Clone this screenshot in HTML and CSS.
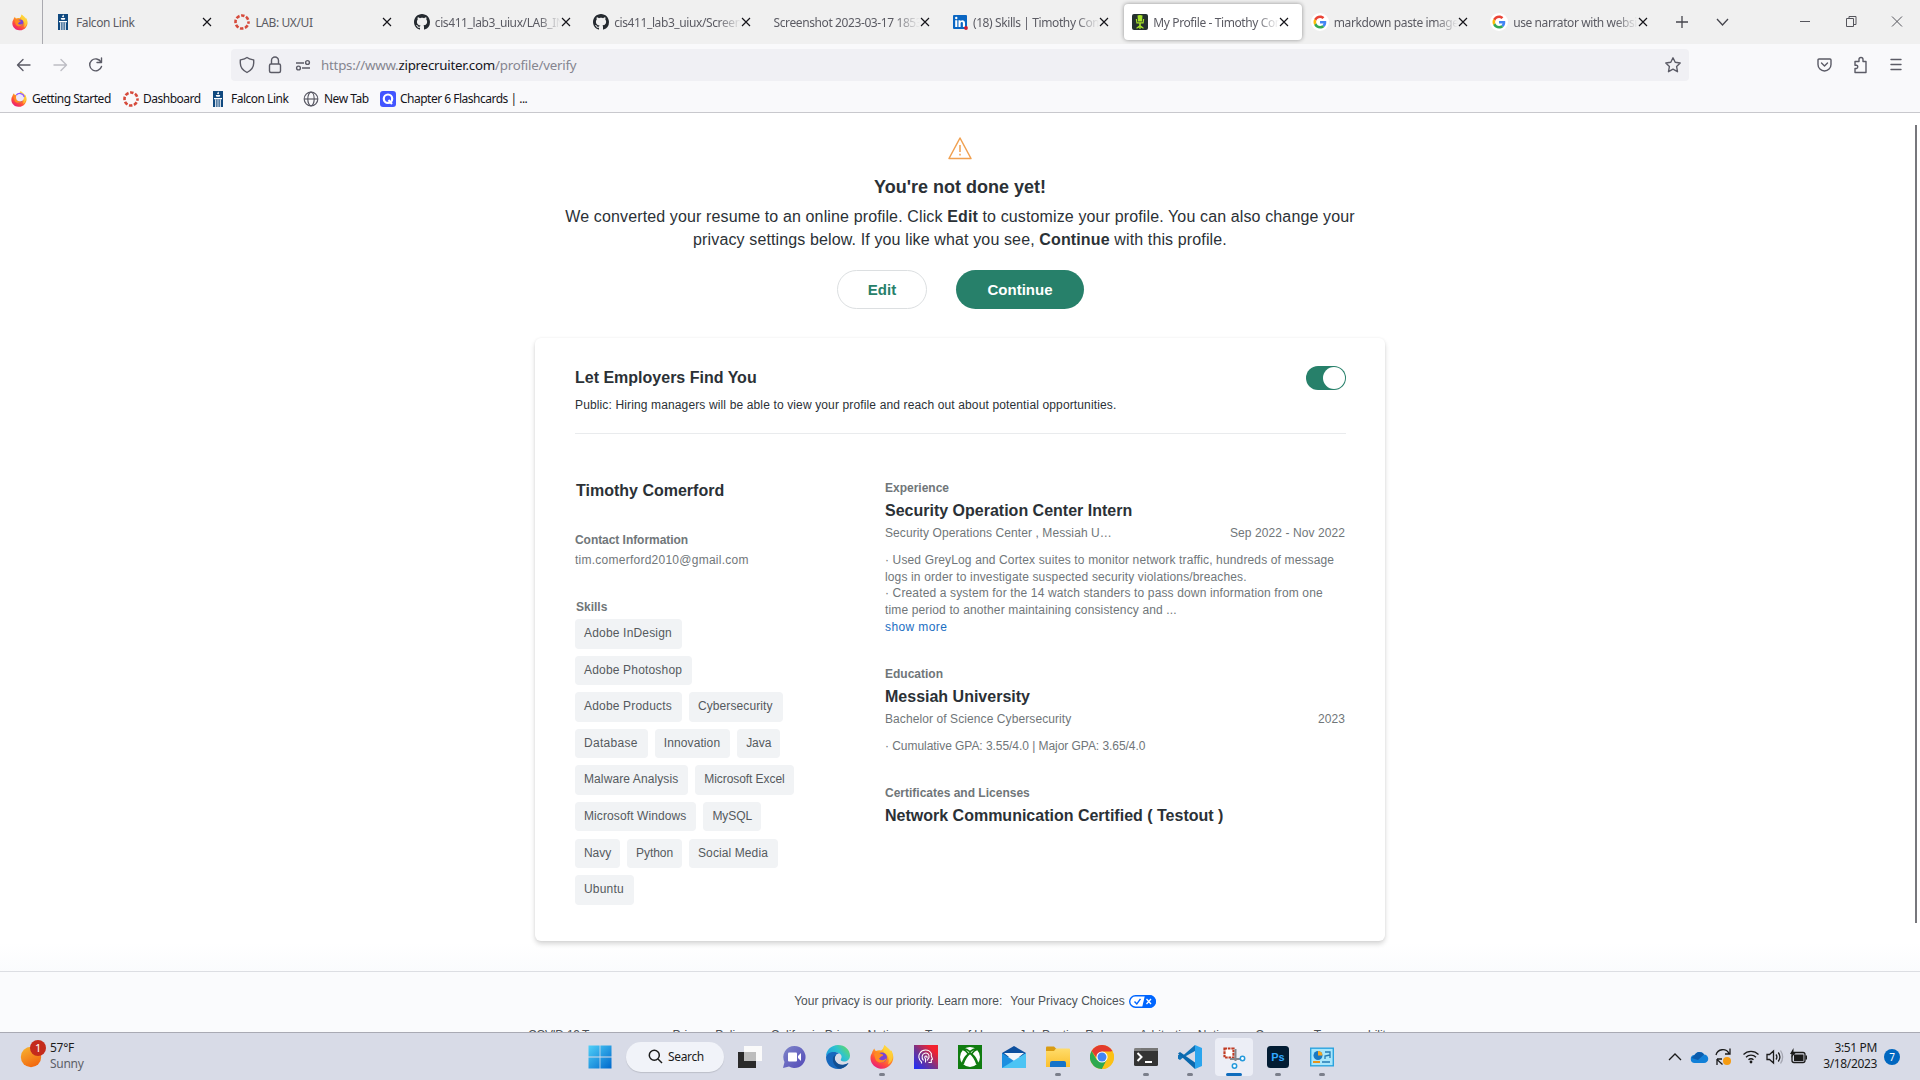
FILE: index.html
```html
<!DOCTYPE html>
<html lang="en">
<head>
<meta charset="utf-8">
<title>My Profile - Timothy Comerford</title>
<link rel="stylesheet" href="styles.css">
</head>
<body>
<svg class="defs" width="0" height="0" aria-hidden="true">
  <defs>
    <linearGradient id="ffg" x1=".8" y1="0" x2=".2" y2="1"><stop offset="0" stop-color="#fff44f"/><stop offset=".4" stop-color="#ff9a1f"/><stop offset=".7" stop-color="#ff4a3d"/><stop offset="1" stop-color="#e31587"/></linearGradient>
    <linearGradient id="wing" x1="0" y1="0" x2="1" y2="1"><stop offset="0" stop-color="#4fd0f8"/><stop offset="1" stop-color="#0068cc"/></linearGradient>
    <linearGradient id="edgeg" x1="0" y1=".6" x2="1" y2="0"><stop offset="0" stop-color="#1b9de2"/><stop offset=".5" stop-color="#2ec3cf"/><stop offset="1" stop-color="#6ee04c"/></linearGradient>
    <linearGradient id="chatg" x1="0" y1="0" x2="1" y2="1"><stop offset="0" stop-color="#7f86c9"/><stop offset="1" stop-color="#5349b8"/></linearGradient>
    <linearGradient id="headg" x1="0" y1="1" x2="1" y2="0"><stop offset="0" stop-color="#1b2fff"/><stop offset=".45" stop-color="#71338f"/><stop offset=".8" stop-color="#f2222f"/></linearGradient>
    <linearGradient id="sung" x1="0" y1="0" x2=".5" y2="1"><stop offset="0" stop-color="#f7b733"/><stop offset="1" stop-color="#f26a10"/></linearGradient>
    <linearGradient id="foldg" x1="0" y1="0" x2="0" y2="1"><stop offset="0" stop-color="#ffdc6b"/><stop offset="1" stop-color="#fbc02d"/></linearGradient>
    <symbol id="firefox" viewBox="0 0 24 24">
      <path fill="url(#ffg)" d="M2 8C2.500 6 3.500 4.500 4.500 3.500C4.500 4.500 5 5.500 6 6C8 5 9.500 5 11 5.500C12.500 5 13.500 3 14.500 0C16 2 19 3.500 20 6.500L21.500 5.500C24 11 24 15 21 19C18 23 13.500 24.500 9 23.400C3.500 22 .5 17.500 .5 13C.5 11 1 9.500 2 8Z"/>
      <path fill="#ffd43a" d="M14.500 0C16 2 21 4 22.500 9C23.600 14 21 18 18 19.500C20 14 18 10 14.500 8C12.500 6 13.500 3 14.500 0Z" opacity=".75"/>
      <circle cx="12" cy="12.500" r="5" fill="#7843d6"/>
      <path fill="#ff8a22" d="M4 9C6 7 9 7.500 11 9C13 9 14 10 12.500 11C10 11.500 10.500 13 9 13.500C10 15.500 14 16 16.500 13C16 18 8 19.500 5.500 14.500Z"/>
    </symbol>
    <symbol id="close" viewBox="0 0 10 10"><path d="M1 1L9 9M9 1L1 9" stroke="#15141a" stroke-width="1.150" fill="none"/></symbol>
    <symbol id="falcon" viewBox="0 0 10 16"><path fill="#10497f" d="M0 0H10V16H0Z"/><path fill="#fff" d="M4.200 3C4 2 5 1.500 5.200 .6C6 1.600 6.200 2.500 5.700 3.200ZM2.700 4H7.300L6.600 5.700H3.400ZM1 7H9V8.200H1ZM2.200 8.600H3.300V16H2.200ZM4.500 8.600H5.500V16H4.500ZM6.700 8.600H7.800V16H6.700Z"/></symbol>
    <symbol id="canvas" viewBox="0 0 16 16"><circle cx="8" cy="8" r="6.500" fill="none" stroke="#d64b3c" stroke-width="2.600" stroke-dasharray="3.500 1.600" stroke-dashoffset="1.700"/></symbol>
    <symbol id="github" viewBox="0 0 16 16"><path fill="#24292f" d="M8 0C3.580 0 0 3.580 0 8c0 3.540 2.290 6.530 5.470 7.590.4.070.55-.17.55-.38 0-.19-.01-.82-.01-1.490-2.010.37-2.530-.49-2.690-.94-.09-.23-.48-.94-.82-1.130-.28-.15-.68-.52-.01-.53.63-.01 1.080.58 1.230.82.72 1.210 1.870.87 2.330.66.07-.52.28-.87.51-1.070-1.780-.2-3.640-.89-3.640-3.950 0-.87.31-1.590.82-2.150-.08-.2-.36-1.020.08-2.120 0 0 .67-.21 2.200.82.64-.18 1.320-.27 2-.27s1.360.09 2 .27c1.530-1.040 2.200-.82 2.200-.82.44 1.100.16 1.920.08 2.120.51.56.82 1.270.82 2.150 0 3.070-1.870 3.750-3.650 3.950.29.25.54.73.54 1.480 0 1.070-.01 1.930-.01 2.200 0 .21.15.46.55.38A8.010 8.010 0 0 0 16 8c0-4.420-3.580-8-8-8z"/></symbol>
    <symbol id="google" viewBox="0 0 18 18"><circle cx="9" cy="9" r="9" fill="#fff"/><g transform="translate(2.500 2.500) scale(.272)"><path fill="#EA4335" d="M24 9.500c3.540 0 6.710 1.220 9.210 3.600l6.850-6.850C35.900 2.380 30.470 0 24 0 14.620 0 6.510 5.380 2.560 13.220l7.980 6.190C12.430 13.720 17.740 9.500 24 9.500z"/><path fill="#4285F4" d="M46.980 24.550c0-1.570-.15-3.090-.38-4.550H24v9.020h12.940c-.58 2.960-2.260 5.480-4.780 7.180l7.730 6c4.510-4.180 7.090-10.360 7.090-17.650z"/><path fill="#FBBC05" d="M10.530 28.590c-.48-1.450-.76-2.990-.76-4.590s.27-3.140.76-4.590l-7.980-6.190C.92 16.460 0 20.120 0 24c0 3.880.92 7.540 2.560 10.780l7.970-6.190z"/><path fill="#34A853" d="M24 48c6.480 0 11.930-2.130 15.890-5.810l-7.730-6c-2.150 1.450-4.920 2.300-8.160 2.300-6.260 0-11.570-4.220-13.470-9.910l-7.980 6.190C6.510 42.620 14.620 48 24 48z"/></g></symbol>
  </defs>
</svg>

<header class="tabs">
  <div class="ff-view"><svg width="16" height="17"><use href="#firefox"/></svg></div>
  <div class="tab"><svg class="fav" width="16" height="16"><use href="#falcon"/></svg><span class="tab-title">Falcon Link</span><svg class="x" width="10" height="10"><use href="#close"/></svg></div>
  <div class="tab"><svg class="fav" width="16" height="16"><use href="#canvas"/></svg><span class="tab-title">LAB: UX/UI</span><svg class="x" width="10" height="10"><use href="#close"/></svg></div>
  <div class="tab"><svg class="fav" width="16" height="16"><use href="#github"/></svg><span class="tab-title fade">cis411_lab3_uiux/LAB_INS</span><svg class="x" width="10" height="10"><use href="#close"/></svg></div>
  <div class="tab"><svg class="fav" width="16" height="16"><use href="#github"/></svg><span class="tab-title fade">cis411_lab3_uiux/Screenshot</span><svg class="x" width="10" height="10"><use href="#close"/></svg></div>
  <div class="tab"><span class="tab-title fade no-icon">Screenshot 2023-03-17 185321</span><svg class="x" width="10" height="10"><use href="#close"/></svg></div>
  <div class="tab"><svg class="fav" width="16" height="16" viewBox="-1 0 16 16"><rect y="1" width="14" height="14" rx="1" fill="#0a66c2"/><path fill="#fff" d="M2.200 6.200H4.300V13H2.200ZM5.500 6.200H7.500V7.200C8.500 5.600 12 5.700 12 8.900V13H9.900V9.400C9.900 7.300 7.600 7.500 7.600 9.400V13H5.500Z"/><circle cx="3.250" cy="4" r="1.200" fill="#fff"/><circle cx="13" cy="14" r="1.900" fill="#cf1b2f"/></svg><span class="tab-title fade">(18) Skills | Timothy Comerford</span><svg class="x" width="10" height="10"><use href="#close"/></svg></div>
  <div class="tab active"><svg class="fav" width="16" height="16" viewBox="0 0 16 16"><rect width="16" height="16" rx="2" fill="#24302f"/><path fill="#a6e22a" d="M5.500 1.500Q8 .5 10.500 1.500L10 7.500H6ZM3.800 5H5L5.400 8.300H10.600L11 5H12.200L11.600 9.600H8.800V11.500L11.500 13.500V14.700L8.600 13.400V15H7.400V13.400L4.500 14.700V13.500L7.200 11.500V9.600H4.400Z"/></svg><span class="tab-title fade">My Profile - Timothy Comer</span><svg class="x" width="10" height="10"><use href="#close"/></svg></div>
  <div class="tab"><svg class="fav" width="18" height="18"><use href="#google"/></svg><span class="tab-title fade">markdown paste image f</span><svg class="x" width="10" height="10"><use href="#close"/></svg></div>
  <div class="tab"><svg class="fav" width="18" height="18"><use href="#google"/></svg><span class="tab-title fade">use narrator with website</span><svg class="x" width="10" height="10"><use href="#close"/></svg></div>
  <svg class="tab-tools" width="60" height="16" viewBox="0 0 60 16" fill="none" stroke="#45454d" stroke-width="1.300"><path d="M4 8H16M10 2V14M45 5L50.500 11L56 5"/></svg>
  <svg class="win-tools" width="112" height="16" viewBox="0 0 112 16" fill="none" stroke="#55555c"><path d="M5 7.500H15M51.500 4.500H58.500V12.500H51.500ZM54 4.500V2.500H61V10.500H58.500M97 2.500L107 12.500M107 2.500L97 12.500"/></svg>
</header>

<nav class="navbar">
  <svg class="nav-arrows" width="100" height="20" viewBox="0 0 100 20" fill="none" stroke="#5b5b66" stroke-width="1.400" stroke-linecap="round" stroke-linejoin="round"><path d="M14 10H2M7 4.500L1.500 10L7 15.500"/><path stroke="#bdbdc4" d="M38 10H50M45 4.500L50.500 10L45 15.500"/><path d="M85 7A6 6 0 1 0 85.500 11.500M85.500 3V7.500H81"/></svg>
  <div class="urlbar">
    <svg width="76" height="20" viewBox="0 0 76 20" fill="none" stroke="#5b5b66" stroke-width="1.400" stroke-linejoin="round"><path d="M9 2.500C11 4 13.500 4.500 15.700 5V8C15.700 13 12.500 15.700 9 17.500C5.500 15.700 2.300 13 2.300 8V5C4.500 4.500 7 4 9 2.500Z"/><rect x="31.500" y="9" width="11" height="8.500" rx="1.500"/><path d="M33.500 9V5.500A3.500 3.500 0 0 1 40.500 5.500V9M58 8H66M64 13H72"/><circle cx="69.500" cy="7.500" r="1.900"/><circle cx="60.500" cy="13" r="1.900"/></svg>
    <span class="url">https://www.<b>ziprecruiter.com</b>/profile/verify</span>
    <svg class="star" width="18" height="18" viewBox="0 0 18 18" fill="none" stroke="#5b5b66" stroke-width="1.400" stroke-linejoin="round"><path d="M9 1.800L11.200 6.300L16.200 7L12.600 10.500L13.500 15.700L9 13.200L4.500 15.700L5.400 10.500L1.800 7L6.800 6.300Z"/></svg>
  </div>
  <svg class="nav-tools" width="92" height="20" viewBox="0 0 92 20" fill="none" stroke="#5b5b66" stroke-width="1.400" stroke-linejoin="round" stroke-linecap="round"><path d="M4 4H15Q16 4 16 5V9.500A6.500 6.500 0 0 1 3 9.500V5Q3 4 4 4ZM6.500 8L9.500 11L12.500 8"/><path d="M40 17.500V13.500H41.500A1.700 1.700 0 0 0 41.500 10.200H40V6.500H44V4.500A2 2 0 0 1 48 4.500V6.500H51V17.500Z"/><path d="M76 4.500H86M76 9.500H86M76 14.500H86"/></svg>
</nav>

<div class="bookmarks">
  <svg width="16" height="16" viewBox="0 0 24 24"><use href="#firefox"/><circle cx="13.500" cy="9.500" r="6" fill="#ece8fa"/><path d="M8 6A7 7 0 0 1 20 9" stroke="#9059ff" stroke-width="2" fill="none"/></svg><span class="bm bm1">Getting Started</span>
  <svg width="16" height="16"><use href="#canvas"/></svg><span class="bm bm2">Dashboard</span>
  <svg width="16" height="16"><use href="#falcon"/></svg><span class="bm bm3">Falcon Link</span>
  <svg width="16" height="16" viewBox="0 0 16 16" fill="none" stroke="#5b5b66" stroke-width="1.200"><circle cx="8" cy="8" r="6.800"/><ellipse cx="8" cy="8" rx="3.200" ry="6.800"/><path d="M1.200 8H14.800"/></svg><span class="bm bm4">New Tab</span>
  <svg width="16" height="16" viewBox="0 0 16 16"><rect width="16" height="16" rx="3" fill="#4255ff"/><circle cx="8" cy="7.700" r="4.200" fill="none" stroke="#fff" stroke-width="2.200"/><path d="M8.500 9L12 13" stroke="#fff" stroke-width="2"/></svg><span class="bm bm5">Chapter 6 Flashcards | ...</span>
</div>

<main class="page">
  <div class="scrollbar"></div>
  <section class="intro">
    <svg class="warn" width="24" height="23" viewBox="0 0 24 23" fill="none" stroke="#f0a050" stroke-width="1.500" stroke-linejoin="round"><path d="M12 1L23 21.500H1Z"/><path d="M12 8V15M12 16.800V18.500"/></svg>
    <h1>You're not done yet!</h1>
    <p>We converted your resume to an online profile. Click <b>Edit</b> to customize your profile. You can also change your privacy settings below. If you like what you see, <b>Continue</b> with this profile.</p>
    <div class="actions"><button class="edit">Edit</button><button class="continue">Continue</button></div>
  </section>

  <section class="card">
    <div class="visibility">
      <div><h2>Let Employers Find You</h2><p>Public: Hiring managers will be able to view your profile and reach out about potential opportunities.</p></div>
      <div class="toggle"><i></i></div>
    </div>
    <div class="profile">
      <div class="left">
        <h2 class="name">Timothy Comerford</h2>
        <h3 class="contact">Contact Information</h3>
        <p class="email">tim.comerford2010@gmail.com</p>
        <h3 class="skills-label">Skills</h3>
        <div class="skills">
          <div><span>Adobe InDesign</span></div>
          <div><span>Adobe Photoshop</span></div>
          <div><span>Adobe Products</span><span class="snug">Cybersecurity</span></div>
          <div><span class="loose">Database</span><span class="snug">Innovation</span><span class="tight">Java</span></div>
          <div><span class="snug">Malware Analysis</span><span class="tight">Microsoft Excel</span></div>
          <div><span class="snug">Microsoft Windows</span><span class="tight">MySQL</span></div>
          <div><span class="tight">Navy</span><span class="tight">Python</span><span class="snug">Social Media</span></div>
          <div><span>Ubuntu</span></div>
        </div>
      </div>
      <div class="right">
        <article class="experience">
          <h3>Experience</h3>
          <h2>Security Operation Center Intern</h2>
          <div class="meta"><span>Security Operations Center , Messiah U…</span><span>Sep 2022 - Nov 2022</span></div>
          <p class="desc">· Used GreyLog and Cortex suites to monitor network traffic, hundreds of message<br>logs in order to investigate suspected security violations/breaches.<br>· Created a system for the 14 watch standers to pass down information from one<br>time period to another maintaining consistency and ...<br><a>show more</a></p>
        </article>
        <article class="education">
          <h3>Education</h3>
          <h2>Messiah University</h2>
          <div class="meta"><span>Bachelor of Science Cybersecurity</span><span>2023</span></div>
          <p class="desc gpa">· Cumulative GPA: 3.55/4.0 | Major GPA: 3.65/4.0</p>
        </article>
        <article>
          <h3>Certificates and Licenses</h3>
          <h2>Network Communication Certified ( Testout )</h2>
        </article>
      </div>
    </div>
  </section>

  <footer>
    <div class="privacy"><span>Your privacy is our priority. Learn more:</span><span>Your Privacy Choices</span>
      <svg width="27" height="13" viewBox="0 0 27 13"><rect x=".7" y=".7" width="25.600" height="11.600" rx="5.800" fill="#fff" stroke="#06f" stroke-width="1.400"/><path fill="#06f" d="M16 0H20.500A6.500 6.500 0 0 1 20.500 13H13Z"/><path d="M5.500 6.500L7.800 9L11.500 3.800" fill="none" stroke="#06f" stroke-width="1.400"/><path d="M17.500 4L22 9M22 4L17.500 9" stroke="#fff" stroke-width="1.300"/></svg>
    </div>
    <div class="links"><span class="covid">COVID-19 Transparency</span><span>Privacy Policy</span><span>California Privacy Notice</span><span>Terms of Use</span><span>Job Posting Rules</span><span>Arbitration Notice</span><span>Consumer Transparability</span></div>
  </footer>
</main>

<div class="taskbar">
  <div class="weather">
    <svg width="28" height="32" viewBox="0 0 28 32"><circle cx="12" cy="19" r="10.200" fill="url(#sung)"/><circle cx="19" cy="10" r="8" fill="#c42b1c"/><text x="19" y="14" text-anchor="middle" class="badge-num">1</text></svg>
    <div><div>57°F</div><div class="sunny">Sunny</div></div>
  </div>
  <div class="apps">
    <div class="app"><svg width="24" height="24" viewBox="0 0 24 24"><path fill="url(#wing)" d="M.5.5H11.600V11.600H.5ZM12.400.5H23.500V11.600H12.400ZM.5 12.400H11.600V23.500H.5ZM12.400 12.400H23.500V23.500H12.400Z"/></svg></div>
    <div class="search"><svg width="15" height="15" viewBox="0 0 15 15" fill="none" stroke="#1b1b1b" stroke-width="1.500"><circle cx="6.300" cy="6.300" r="5"/><path d="M10 10L14 14"/></svg><span>Search</span></div>
    <div class="app"><svg width="24" height="24" viewBox="0 0 24 24"><path fill="#2a2a2a" d="M0 7H18V23H0Z"/><path fill="#fafafa" d="M6 1H24V16H6Z"/><path fill="#bdbdbd" d="M6 7H18V16H6Z"/></svg></div>
    <div class="app"><svg width="24" height="24" viewBox="0 0 24 24"><path fill="url(#chatg)" d="M12.500 1A11 11 0 1 1 7 21.500L1 23L2.500 17A11 11 0 0 1 12.500 1Z"/><rect x="6" y="7.500" width="9" height="9" rx="1" fill="#fff"/><path fill="#fff" d="M16 11L19 8V16L16 13Z"/></svg></div>
    <div class="app"><svg width="24" height="24" viewBox="0 0 24 24"><path fill="url(#edgeg)" d="M0 11.500C0 5 5.500 0 12 0C19 0 24 5 24 10.500C24 14.500 21 16.500 18 16.500C15.500 16.500 14 15.500 15 14C17 10.500 14 7.500 10 7.500C5 7.500 1 9.500 0 11.500Z"/><path fill="#1768bd" d="M0 12C1 7 9 5.500 13 8.500C9.500 9 8 12 9 15.500C10.500 20 17 21.500 22.500 18C20 22 16 24 12 24C5 24 0 19 0 12Z"/><path fill="#124f92" d="M7 13C6 18 10 23 14 23.700C18 23 21 21 22.500 18C17 21 11.500 20 9.500 16C8.500 14 8.500 12 10 10C8 10.500 7.200 11.700 7 13Z"/></svg></div>
    <div class="app"><svg width="24" height="24"><use href="#firefox"/></svg><i class="run"></i></div>
    <div class="app"><svg width="24" height="24" viewBox="0 0 24 24"><rect width="24" height="24" fill="url(#headg)"/><path d="M7.500 18.500V17C4.500 14.500 4 10.500 6 8C8.500 4 15 4 17.300 8.500V11L18.500 14L17.300 15V17.500H14.500M9.500 15.500C7 12.500 8 9 10.700 8.200C13.300 7.500 15.500 9.500 15 12.500L13 15.500M11.500 17.500V13.800C10 12.500 11 11 12 11C13 11 13.300 12 12.800 13" fill="none" stroke="#fff" stroke-width="1.100"/></svg></div>
    <div class="app"><svg width="24" height="24" viewBox="0 0 24 24"><rect width="24" height="24" fill="#107c10"/><circle cx="12" cy="12" r="10" fill="#fff"/><path d="M5 4C8 3 10 5 12 6.700C14 5 16 3 19 4M5 19C6.500 14 9 10.500 12 8C15 10.500 17.500 14 19 19M5 4.500C7 5 9 7 10.500 9C7 12 5 15.500 4.500 19M19 4.500C17 5 15 7 13.500 9C17 12 19 15.500 19.500 19" fill="none" stroke="#107c10" stroke-width="1.800"/></svg></div>
    <div class="app"><svg width="24" height="24" viewBox="0 0 24 24"><path fill="#0d4f9e" d="M0 8L12 1L24 8V12H0Z"/><path fill="#f3f6fa" d="M2 8H22L12 16Z"/><path fill="#1c8fe0" d="M0 8L12 16L24 23H0Z"/><path fill="#4cc4f4" d="M24 8V23H0Z"/></svg></div>
    <div class="app"><svg width="24" height="24" viewBox="0 0 24 24"><path fill="#d99b12" d="M0 2.500Q0 1.500 1 1.500H8L10.500 4L8 7H0Z"/><path fill="url(#foldg)" d="M0 6H8L10 3.500H23Q24 3.500 24 4.500V22H0Z"/><path fill="#1573c9" d="M4 22V18Q4 16 6 16H18Q20 16 20 18V22Z"/></svg><i class="run"></i></div>
    <div class="app"><svg width="24" height="24" viewBox="0 0 24 24"><circle cx="12" cy="12" r="12" fill="#fbc116"/><path fill="#e33b2e" d="M1.600 6A12 12 0 0 1 22.400 6L12 12H6Z"/><path fill="#2da94f" d="M1.600 6A12 12 0 0 0 12 24L17.200 15L6.800 15Z"/><path fill="#fbc116" d="M12 6.500H22.600A12 12 0 0 1 12 24L17 14Z"/><circle cx="12" cy="12" r="5.600" fill="#fff"/><circle cx="12" cy="12" r="4.500" fill="#4285f4"/></svg></div>
    <div class="app"><svg width="24" height="24" viewBox="0 0 24 24"><rect y="3" width="24" height="18" rx="1.500" fill="#343434"/><path fill="#777" d="M7 3H24V6H7Z"/><path fill="#c9c9c9" d="M0 4Q0 3 1 3H7V6H0Z" opacity=".5"/><path d="M3.500 8L7.500 12L3.500 16M11 17H18" fill="none" stroke="#fff" stroke-width="2"/></svg><i class="run"></i></div>
    <div class="app"><svg width="24" height="24" viewBox="0 0 24 24"><path fill="#0f72b8" d="M17 0L4.500 11L2 9L0 10.300V13.700L2 15L4.500 13L17 6Z"/><path fill="#0a68ad" d="M0 8.500L2 7L17 17.500V24Z"/><path fill="#2aa5ee" d="M17 0L24 3V21L17 24Z"/></svg><i class="run"></i></div>
    <div class="app selected"><svg width="24" height="24" viewBox="0 0 24 24"><path d="M2.500 3.500H11.500V12.500H2.500Z" fill="#fff" stroke="#c03b24" stroke-width="2.200" stroke-dasharray="2.600 .8"/><path d="M13.500 4V16M8 14H19" stroke="#85878c" stroke-width="2"/><circle cx="20.500" cy="13.500" r="2.200" fill="#fff" stroke="#2399dc" stroke-width="1.500"/><circle cx="12.500" cy="21" r="2.200" fill="#fff" stroke="#2399dc" stroke-width="1.500"/></svg><i class="run current"></i></div>
    <div class="app"><svg width="24" height="24" viewBox="0 0 24 24"><rect x="1" y="1" width="22" height="22" rx="3.500" fill="#021c33"/><text x="12" y="16" text-anchor="middle" class="ps">Ps</text></svg><i class="run"></i></div>
    <div class="app"><svg width="24" height="24" viewBox="0 0 24 24"><rect x=".7" y="3.200" width="22.600" height="17.600" fill="#a8e6fb" stroke="#2ba3df" stroke-width="1.400"/><circle cx="8" cy="10.500" r="4.500" fill="#1a78c2"/><path fill="#f5a623" d="M8 10.500V6A4.500 4.500 0 0 1 12.500 10.500Z"/><path d="M3 17H10" stroke="#e8941a" stroke-width="2"/><path d="M12 17H20M15 14V11L20 10M15 7H20V13" stroke="#247bb5" fill="none" stroke-width="1.300"/></svg><i class="run"></i></div>
  </div>
  <div class="tray">
    <svg width="148" height="24" viewBox="0 0 148 24" fill="none" stroke="#1b1b1b" stroke-width="1.300"><path d="M4 15L10 9L16 15"/><path fill="#1180d8" stroke="none" d="M30 18A4 4 0 0 1 29.500 10A5.500 5.500 0 0 1 39 9.500A4.200 4.200 0 0 1 39 18Z"/><path fill="#0b5cad" stroke="none" d="M29.500 10A5.500 5.500 0 0 1 39 9.500L33 15L26.500 13Z"/><path d="M51 10A7 7 0 0 1 64 8.500M65 3.500V9H60M52 14V20M52 14H57M52 14.500L57.500 19.500"/><circle cx="62" cy="16" r="4" fill="#f59b11" stroke="none"/><path d="M78.500 9.500A10.500 10.500 0 0 1 93.500 9.500M81 12.200A7 7 0 0 1 91 12.200M83.500 14.800A3.500 3.500 0 0 1 88.500 14.800"/><circle cx="86" cy="17" r="1.400" fill="#1b1b1b" stroke="none"/><path d="M102 9.500H104.500L108.500 6V18L104.500 14.500H102ZM111 9.500Q112.800 12 111 14.500M113.300 7.500Q116.500 12 113.300 16.500"/><path d="M115.500 5.500Q119.800 12 115.500 18.500" stroke="#a5a7b2"/><rect x="127" y="7.500" width="13" height="10" rx="2"/><path fill="#1b1b1b" stroke="none" d="M129 9.500H138.500V16H129ZM140.500 10.500H142V14.500H140.500ZM128.500 3L125 9H127.500L126 13L131 7.500H128.500Z"/></svg>
    <div class="clock"><div>3:51 PM</div><div>3/18/2023</div></div>
    <div class="count">7</div>
  </div>
</div>
</body>
</html>
```
FILE: styles.css
```css
* { box-sizing: border-box; }
body { margin: 0; width: 1920px; height: 1080px; overflow: hidden; display: flex; flex-direction: column; background: #fff; font: 12px/16px "Liberation Sans", Arial, sans-serif; color: #2b3136; }
h1, h2, h3, p { margin: 0; }
svg { flex: none; display: block; }
.defs { position: absolute; }

.tabs, .navbar, .bookmarks, .taskbar { font-family: "Noto Sans", "Open Sans", sans-serif; }

.tabs { height: 44px; flex: none; display: flex; align-items: center; background: #f0f0f0; }
.ff-view { width: 43px; height: 44px; flex: none; border-right: 1px solid #aaaab0; display: flex; align-items: center; justify-content: center; padding-right: 3px; margin-right: 4px; }
.tab { width: 179.4px; flex: none; height: 36px; display: flex; align-items: center; padding: 0 14px 0 8px; }
.tab.active { width: 177.4px; margin: 0 1px; padding: 0 13px 0 8px; background: #fff; border-radius: 4px; box-shadow: 0 0 4px rgba(0,0,0,.4); }
.fav { margin-right: 5px; }
.tab-title { flex: 1; min-width: 0; overflow: hidden; white-space: nowrap; font-size: 12px; letter-spacing: -.4px; color: #5b5b63; margin-top: 1px; }
.tab-title.no-icon { margin-left: 1px; }
.fade { -webkit-mask-image: linear-gradient(90deg, #000 82%, transparent); mask-image: linear-gradient(90deg, #000 82%, transparent); }
.tab-tools { margin-left: 10px; }
.win-tools { margin-left: 63px; }

.navbar { height: 42px; flex: none; display: flex; align-items: center; background: #f9f9fb; }
.nav-arrows { margin: 0 115px 0 16px; }
.urlbar { width: 1458px; height: 32px; border-radius: 4px; background: #f0f0f4; display: flex; align-items: center; padding-left: 7px; }
.url { margin-left: 7px; font-size: 13.3px; letter-spacing: -.23px; color: #85858f; }
.url b { font-weight: 400; color: #15141a; }
.star { margin-left: auto; margin-right: 7px; }
.nav-tools { margin-left: 126px; }

.bookmarks { height: 27px; flex: none; display: flex; align-items: center; background: #f9f9fb; border-bottom: 1px solid #c8c8cd; padding: 0 0 1px 11px; color: #15141a; }
.bm { white-space: nowrap; letter-spacing: -.5px; margin-left: 5px; }
.bm1 { width: 91px; }
.bm2 { width: 67px; margin-left: 4px; }
.bm3 { width: 72px; }
.bm4 { width: 56px; }
.bm5 { margin-left: 4px; }

.page { position: relative; height: 919px; flex: none; display: flex; flex-direction: column; align-items: center; overflow: hidden; background: linear-gradient(#fff 830px, #fafbfd 860px); }
.scrollbar { position: absolute; right: 3px; top: 12px; width: 2px; height: 798px; background: #77777c; }
.intro { width: 850px; text-align: center; display: flex; flex-direction: column; align-items: center; }
.warn { margin-top: 24px; }
.intro h1 { font-size: 18px; line-height: 24px; margin-top: 15px; }
.intro p { font-size: 16px; line-height: 23px; margin-top: 6px; width: 810px; letter-spacing: .13px; }
.actions { display: flex; gap: 29px; margin-top: 19px; padding-left: 1px; }
button { height: 39px; padding: 0; border-radius: 20px; font: bold 15px/20px "Liberation Sans", Arial, sans-serif; }
.edit { width: 90px; background: #fff; border: 1px solid #dcdfe1; color: #27806a; }
.continue { width: 128px; background: #27806a; border: 0; color: #fff; }

.card { width: 850px; height: 603px; flex: none; margin-top: 29px; padding: 28px 39px 0 40px; background: #fff; border-radius: 6px; box-shadow: 0 3px 5px rgba(0,0,0,.16), 0 0 3px rgba(0,0,0,.05); }
h2 { font-size: 16px; line-height: 22px; }
.visibility { height: 68px; display: flex; justify-content: space-between; border-bottom: 1px solid #e9ebed; }
.visibility h2 { padding-top: 1px; }
.visibility p { margin-top: 8px; font-size: 12px; line-height: 16px; letter-spacing: .135px; }
.toggle { width: 40px; height: 24px; border-radius: 12px; background: #27806a; padding: 1px; display: flex; justify-content: flex-end; }
.toggle i { width: 22px; height: 22px; border-radius: 50%; background: #fff; }
h3 { font-size: 12px; line-height: 16px; color: #707679; }
.profile { display: flex; color: #707679; }
.profile h2 { color: #2b3136; }
.left { width: 310px; flex: none; padding-top: 46px; }
.name { margin: 0 0 30px 1px; }
.contact { letter-spacing: -.05px; }
.email { margin-top: 4px; letter-spacing: .25px; }
.skills-label { margin: 31px 0 0 1px; }
.skills { margin-top: 4px; }
.skills div { display: flex; gap: 7px; height: 29.5px; margin-bottom: 7.1px; }
.skills span { background: #f1f3f5; border-radius: 4px; padding: 0 10px 0 9px; line-height: 29px; color: #555a5e; letter-spacing: .18px; white-space: nowrap; }
.skills .snug { letter-spacing: .1px; }
.skills .tight { letter-spacing: -.07px; padding-right: 9px; }
.skills .loose { letter-spacing: .3px; }
.right { width: 461px; padding-top: 46px; }
.right h2 { margin-top: 4px; line-height: 22px; }
.meta { display: flex; justify-content: space-between; margin-top: 2px; line-height: 18px; padding-right: 1px; letter-spacing: .09px; }
.desc { margin-top: 10px; line-height: 16.7px; white-space: nowrap; letter-spacing: .14px; }
.desc.gpa { letter-spacing: -.05px; }
.desc a { color: #1b6ec2; letter-spacing: .4px; }
.experience { height: 186px; }
.education { height: 119px; }

footer { width: 100%; height: 61px; flex: none; margin-top: 30px; border-top: 1px solid #dcdee3; background: #fafbfd; display: flex; flex-direction: column; align-items: center; color: #4d5257; }
.privacy { display: flex; align-items: center; margin-top: 21px; height: 16px; padding-left: 30px; }
.privacy span { margin-right: 8px; }
.privacy span + span { margin-right: 4px; letter-spacing: .05px; }
.links { display: flex; justify-content: space-between; width: 864px; margin-top: 18px; white-space: nowrap; }
.links .covid { letter-spacing: -.5px; }

.taskbar { position: relative; height: 48px; flex: none; border-top: 1px solid #a9aab4; background: #d8dbe7; display: flex; align-items: center; color: #1b1b1b; }
.weather { width: 578px; display: flex; align-items: center; padding-left: 19px; gap: 3px; letter-spacing: -.3px; }
.weather svg { margin-top: -6px; }
.weather > div { margin-top: -1px; }
.sunny { color: #5c5f68; }
.badge-num { font: 11px "Noto Sans", sans-serif; fill: #fff; }
.apps { display: flex; align-items: center; height: 47px; }
.app { position: relative; width: 44px; height: 38px; display: flex; align-items: center; justify-content: center; }
.search { width: 98px; height: 30px; margin: 0 3px 0 4px; border-radius: 15px; background: #f1f3f9; box-shadow: 0 1px 1px rgba(0,0,0,.13); display: flex; align-items: center; padding-left: 22px; gap: 5px; letter-spacing: -.35px; }
.apps .search + .app { margin-left: 1px; }
.selected { width: 38px; margin: 0 3px; border-radius: 4px; background: #eceef6; }
.run { position: absolute; bottom: 0; left: 50%; width: 6px; height: 3px; margin-left: -3px; border-radius: 2px; background: #7b7f8b; }
.run.current { width: 16px; margin-left: -8px; background: #0f6cbd; }
.ps { font: bold 11px "Liberation Sans", Arial, sans-serif; fill: #31a8ff; }
.tray { margin-left: auto; display: flex; align-items: center; padding-right: 20px; }
.clock { width: 64px; text-align: right; letter-spacing: -.35px; margin-top: -1px; }
.count { width: 16px; height: 16px; margin-left: 7px; border-radius: 50%; background: #0067c0; color: #fff; font-size: 10px; line-height: 16px; text-align: center; }
```
